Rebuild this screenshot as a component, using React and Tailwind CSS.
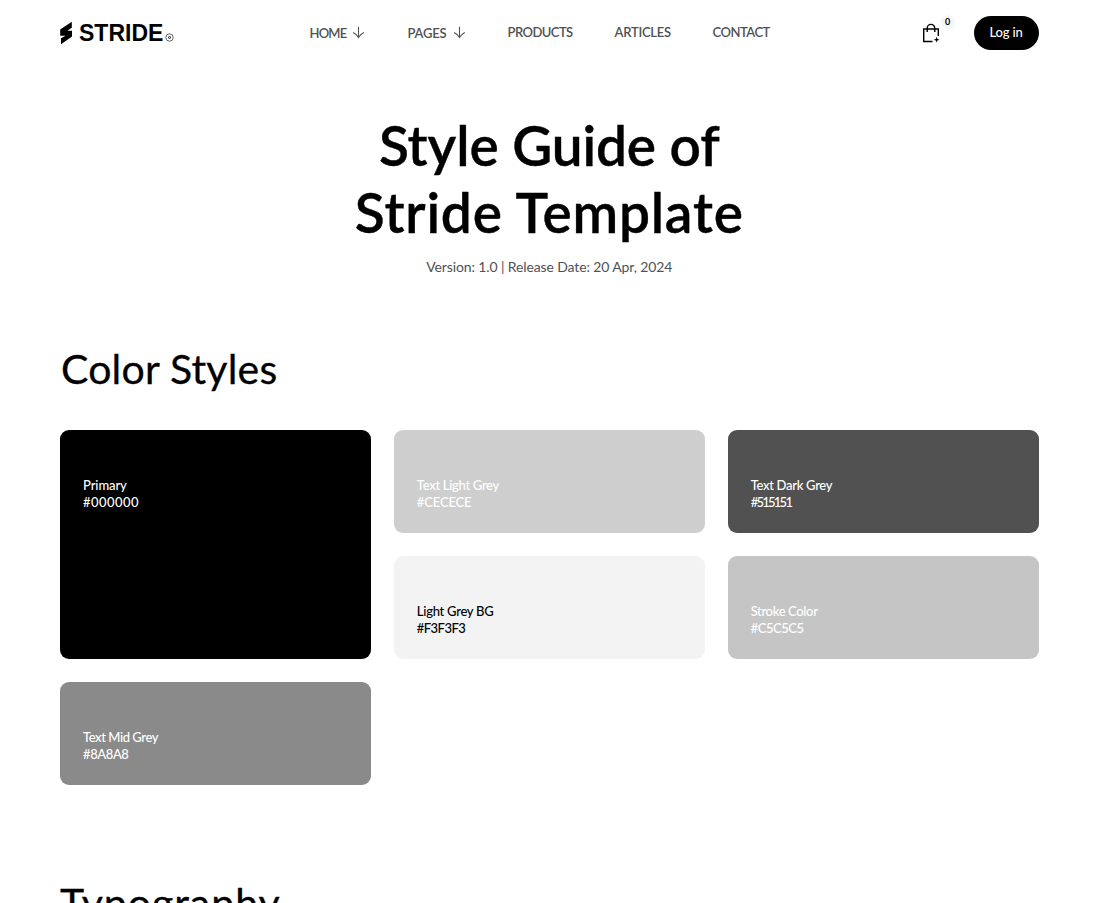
import React from 'react';

const navItems = [
  { label: 'HOME', arrow: true, className: 'w-[98px] pt-[2px]', text: 'tracking-[-0.8px]' },
  { label: 'PAGES', arrow: true, className: 'w-[100px] pt-[2px]', text: 'tracking-[-0.2px]' },
  { label: 'PRODUCTS', className: 'w-[107px]', text: 'tracking-[-0.55px]' },
  { label: 'ARTICLES', className: 'w-[98px]', text: 'tracking-[-0.25px]' },
  { label: 'CONTACT', className: 'w-[70px]', text: 'tracking-[-0.5px]' },
];

const colors = [
  {
    name: 'Primary',
    hex: '#000000',
    className: 'row-span-2 bg-black text-white',
    nameClass: 'tracking-[-0.1px]',
    hexClass: 'tracking-[0.45px]',
  },
  {
    name: 'Text Light Grey',
    hex: '#CECECE',
    className: 'bg-[#cecece] text-white',
    nameClass: 'tracking-[-0.3px]',
    hexClass: 'tracking-[-0.15px]',
  },
  {
    name: 'Text Dark Grey',
    hex: '#515151',
    className: 'bg-[#515151] text-white',
    nameClass: 'tracking-[-0.3px]',
    hexClass: 'tracking-[-1.75px]',
  },
  {
    name: 'Light Grey BG',
    hex: '#F3F3F3',
    className: 'bg-[#f3f3f3] text-black',
    nameClass: 'tracking-[-0.27px]',
    hexClass: 'tracking-[-0.55px]',
  },
  {
    name: 'Stroke Color',
    hex: '#C5C5C5',
    className: 'bg-[#c5c5c5] text-white',
    nameClass: 'tracking-[-0.35px]',
    hexClass: 'tracking-[-0.45px]',
  },
  {
    name: 'Text Mid Grey',
    hex: '#8A8A8',
    className: 'bg-[#8a8a8a] text-white',
    nameClass: 'tracking-[-0.43px]',
    hexClass: 'tracking-[-0.4px]',
  },
];

function Logo() {
  return (
    <a href="#" className="flex w-[249.5px] items-center text-black">
      <svg width="13" height="24" viewBox="0 0 13 24" fill="currentColor">
        <path d="M11.8.8.2 8.600v6.200h5.300L1 17.300v6l11-7.800V9.700H7.300l4.500-3z" />
      </svg>
      <span className="ml-[6px] font-['Liberation_Sans',sans-serif] text-[23px] leading-6 font-bold">STRIDE</span>
      <svg className="mt-[9px] ml-[2px]" width="9" height="9" viewBox="0 0 9 9" fill="none" stroke="currentColor">
        <circle cx="4.5" cy="4.5" r="3.7" strokeWidth="0.6" />
        <circle cx="4.5" cy="4.5" r="1" strokeWidth="0.9" />
      </svg>
    </a>
  );
}

function ArrowDown() {
  return (
    <svg className="ml-[6px]" width="13" height="13" viewBox="0 0 13 13" fill="none" stroke="currentColor" strokeWidth="1.1">
      <path d="M6.500.8v10.700M1.200 6.600q3.300 1.700 5.300 4.900 2-3.200 5.300-4.900" />
    </svg>
  );
}

function BagIcon() {
  return (
    <svg width="18" height="20" viewBox="0 0 18 20" fill="none" stroke="currentColor" strokeWidth="1.4">
      <path d="M10.5 18.500H1.700V6h14.600v7M5.200 9V5.200a3.800 3.800 0 0 1 7.600 0V9" />
      <path
        d="m14.600 13.800.8 2.100 2.100.8-2.100.8-.8 2.100-.8-2.100-2.100-.8 2.100-.8z"
        fill="currentColor"
        stroke="none"
      />
    </svg>
  );
}

function Navbar() {
  return (
    <header className="flex h-[65px] items-center">
      <Logo />
      <nav className="-mt-[2px] flex text-[13px] leading-4 font-semibold text-[#515151]">
        {navItems.map((item) => (
          <a key={item.label} href="#" className={`flex items-center ${item.className}`}>
            <span className={item.text}>{item.label}</span>
            {item.arrow && <ArrowDown />}
          </a>
        ))}
      </nav>
      <div className="ml-auto flex items-center">
        <a href="#" className="relative mr-[34px] block text-black">
          <BagIcon />
          <span className="absolute -top-[8px] left-[19px] flex size-[14px] items-center justify-center rounded-full bg-[#f6f6f6] text-[9px] font-bold">
            0
          </span>
        </a>
        <a
          href="#"
          className="flex h-[34px] w-[65px] items-center justify-center rounded-full bg-black pt-px text-[13px] font-medium tracking-[-0.2px] text-white"
        >
          Log in
        </a>
      </div>
    </header>
  );
}

function ColorCard({ name, hex, className, nameClass, hexClass }) {
  return (
    <div className={`rounded-[9px] px-[23px] pt-[47px] text-[13px] leading-[17px] font-medium ${className}`}>
      <div className={nameClass}>{name}</div>
      <div className={hexClass}>{hex}</div>
    </div>
  );
}

function SectionTitle({ children, className }) {
  return <h2 className={`text-[41px] leading-[52px] [-webkit-text-stroke:0.3px] ${className}`}>{children}</h2>;
}

export default function App() {
  return (
    <div className="h-[903px] overflow-hidden bg-white pr-[59.5px] pl-[60px] font-['Lato',sans-serif] text-black">
      <Navbar />
      <section className="pt-[47px] text-center">
        <h1 className="text-[55px] leading-[67px] font-semibold [-webkit-text-stroke:0.4px]">
          <span className="tracking-[-0.1px]">Style Guide of</span>
          <br />
          <span className="tracking-[0.8px]">Stride Template</span>
        </h1>
        <p className="mt-[11px] text-[14px] leading-[20px] tracking-[-0.12px] text-[#515151]">
          Version: 1.0 | Release Date: 20 Apr, 2024
        </p>
      </section>
      <section className="pt-[66px]">
        <SectionTitle className="pl-px tracking-[0.2px]">Color Styles</SectionTitle>
        <div className="mt-[35px] grid auto-rows-[103px] grid-cols-3 gap-[23px]">
          {colors.map((color) => (
            <ColorCard key={color.name} {...color} />
          ))}
        </div>
      </section>
      <section className="pt-[92px]">
        <SectionTitle className="tracking-[1px]">Typography</SectionTitle>
      </section>
    </div>
  );
}
